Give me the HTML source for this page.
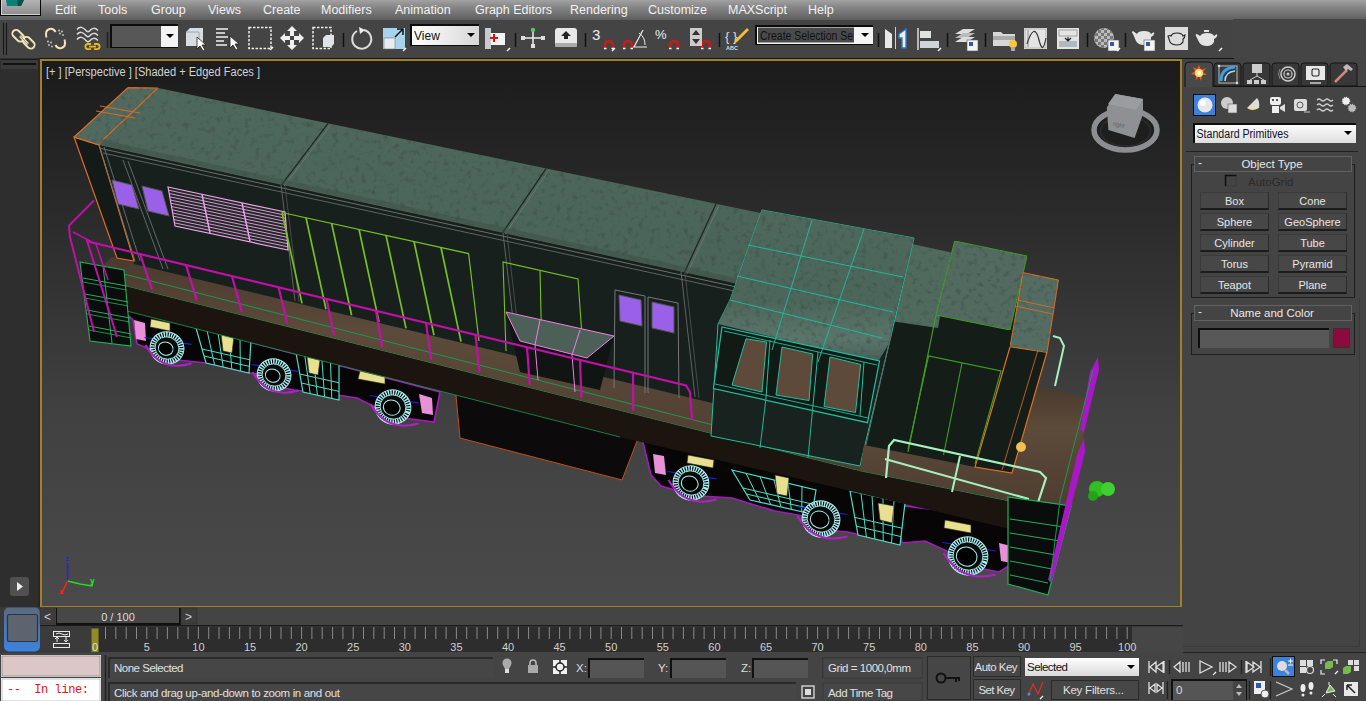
<!DOCTYPE html>
<html><head><meta charset="utf-8">
<style>
*{margin:0;padding:0;box-sizing:border-box}
html,body{width:1366px;height:701px;overflow:hidden;background:#444;font-family:"Liberation Sans",sans-serif;font-size:12px;color:#ddd}
.a{position:absolute}
.t{position:absolute;white-space:nowrap;line-height:1}
#menu{left:0;top:0;width:1366px;height:20px;background:linear-gradient(#a2a2a2,#8a8a8a 30%,#5e5e5e)}
#menu .t{top:4px;font-size:12.5px;color:#f2f2f2}
#tb{left:0;top:20px;width:1234px;height:39px;background:#444;border-bottom:1px solid #151515;border-right:1px solid #151515}
#vp{left:40px;top:59px;width:1142px;height:549px;border:2px solid #a08028;background:linear-gradient(#1b1b1b,#292929 25%,#383838 50%,#414141 65%,#4a4a4a)}
#cp{left:1183px;top:58px;width:183px;height:595px;background:#444}
.btn{position:absolute;width:69px;height:18px;background:#474747;border:1px solid #2b2b2b;border-top-color:#3a3a3a;border-left-color:#3a3a3a;border-bottom:2px solid #1c1c1c;color:#e6e6e6;text-align:center;font-size:11px;line-height:16px}
</style></head><body>
<div id="menu" class="a">
 <div class="a" style="left:0;top:0;width:41px;height:16px;background:linear-gradient(#b4b4b4,#8c8c8c);border:1px solid #080808;border-top:none;box-shadow:inset 1px -1px 0 #d0d0d0"></div>
 <svg class="a" style="left:0;top:0" width="41" height="16"><path d="M6 0 h18 l-3 6 h-14z" fill="#0a8078"/><path d="M17 0 h7 l-3 6 h-3z" fill="#05504a"/></svg>
 <div class="t" style="left:55px">Edit</div>
 <div class="t" style="left:98px">Tools</div>
 <div class="t" style="left:151px">Group</div>
 <div class="t" style="left:208px">Views</div>
 <div class="t" style="left:263px">Create</div>
 <div class="t" style="left:321px">Modifiers</div>
 <div class="t" style="left:395px">Animation</div>
 <div class="t" style="left:475px">Graph Editors</div>
 <div class="t" style="left:570px">Rendering</div>
 <div class="t" style="left:648px">Customize</div>
 <div class="t" style="left:728px">MAXScript</div>
 <div class="t" style="left:808px">Help</div>
</div>
<div id="tb" class="a"></div>
<svg class="a" style="left:0;top:19px" width="1233" height="39" viewBox="0 19 1233 39">
 <g stroke="#1a1a1a" stroke-width="1.2"><line x1="3.5" y1="23" x2="3.5" y2="55"/><line x1="6.5" y1="23" x2="6.5" y2="55"/></g>
 <!-- link -->
 <g fill="none" stroke="#f2e6b8" stroke-width="1.9">
  <rect x="14.5" y="29" width="7.5" height="13.5" rx="3.75" transform="rotate(-45 18.25 35.75)"/>
  <rect x="25" y="36" width="7.5" height="13.5" rx="3.75" transform="rotate(-45 28.75 42.75)"/>
 </g>
 <path d="M20 36 l8 8" stroke="#f2e6b8" stroke-width="2.6"/><path d="M20 36 l8 8" stroke="#7a7050" stroke-width="0.7"/>
 <!-- unlink -->
 <g fill="none" stroke="#f2e6b8" stroke-width="2"><path d="M46.5 37.5 q-2 -7 3 -8.5 q4 -1 6 3"/><path d="M64.5 39.5 q2 7 -3 8.5 q-4 1 -6 -3"/></g>
 <g fill="#b8b8b8"><circle cx="59" cy="30.5" r="1.1"/><circle cx="62" cy="31.5" r="1.1"/><circle cx="60" cy="33.5" r="1.1"/><circle cx="63" cy="35" r="1"/><circle cx="48" cy="41.5" r="1.1"/><circle cx="51" cy="42.5" r="1.1"/><circle cx="49" cy="45" r="1.1"/><circle cx="52" cy="46.5" r="1"/></g>
 <!-- bind -->
 <g fill="none" stroke="#dcdcdc" stroke-width="1.5"><path d="M77 29.5 q4 -5 9.5 1.5 q1.5 1.5 3 0 q4 -5 8.5 -0.5"/><path d="M77 34.5 q4 -5 9.5 1.5 q1.5 1.5 3 0 q4 -5 8.5 -0.5"/><path d="M77 39.5 q4 -5 9.5 1.5 q1.5 1.5 3 0 q4 -5 8.5 -0.5"/></g>
 <g fill="none" stroke="#e8b818" stroke-width="1.8"><path d="M91 44 h-3 a2.6 2.6 0 0 0 0 5.2 h3"/><path d="M94 44 h3 a2.6 2.6 0 0 1 0 5.2 h-3"/><path d="M89 46.6 h7"/></g>
 <line x1="107.5" y1="32" x2="107.5" y2="48" stroke="#1e1e1e" stroke-width="1.5"/>
 <!-- selection filter dropdown -->
 <rect x="110" y="24" width="68" height="24" fill="#0c0c0c"/>
 <rect x="112" y="26" width="49" height="21" fill="#575757"/>
 <rect x="161" y="26" width="17" height="21" fill="#f4f4f4"/>
 <path d="M166 34 h8 l-4 4z" fill="#000"/>
 <!-- select object -->
 <path d="M186 32 l4 -4 h13 v14 l-4 4 h-13z" fill="#d8dde4"/><path d="M186 32 h13 v14" fill="none" stroke="#9aa" stroke-width="1"/>
 <path d="M197 37 v12 l3 -3 l3 5 l2 -1 l-3 -5 h4z" fill="#fff" stroke="#222" stroke-width="0.8"/>
 <!-- select by name -->
 <g stroke="#e8e8e8" stroke-width="1.6"><line x1="216" y1="29" x2="228" y2="29"/><line x1="216" y1="33" x2="225" y2="33"/><line x1="216" y1="37" x2="228" y2="37"/><line x1="216" y1="41" x2="224" y2="41"/><line x1="216" y1="45" x2="227" y2="45"/></g>
 <path d="M230 36 v12 l3 -3 l3 5 l2 -1 l-3 -5 h4z" fill="#fff" stroke="#222" stroke-width="0.8"/>
 <!-- rect select -->
 <rect x="249" y="27.5" width="22" height="21" fill="none" stroke="#eee" stroke-width="1.5" stroke-dasharray="2.5 1.5"/>
 <path d="M270 50 l3 -3" stroke="#fff" stroke-width="1.5"/>
 <!-- move -->
 <g fill="#f0f0f0"><path d="M292 26 l-5 5 h3 v5 h4 v-5 h3z"/><path d="M292 50 l-5 -5 h3 v-5 h4 v5 h3z"/><path d="M280 38 l5 -5 v3 h5 v4 h-5 v3z"/><path d="M304 38 l-5 -5 v3 h-5 v4 h5 v3z"/></g>
 <!-- window crossing -->
 <rect x="313" y="27.5" width="18" height="21" fill="none" stroke="#eee" stroke-width="1.5" stroke-dasharray="2.5 1.5"/>
 <path d="M323 38 l3 -3 h8 v9 l-3 3 h-8z" fill="#e0e4e8"/>
 <line x1="343.5" y1="33" x2="343.5" y2="47" stroke="#111" stroke-width="1.5"/>
 <!-- rotate -->
 <path d="M357 31 a9.5 9.5 0 1 0 7 -1" fill="none" stroke="#ddd" stroke-width="2"/><path d="M359 27 l6 3 l-5 4z" fill="#eee"/>
 <!-- scale -->
 <rect x="383" y="28" width="22" height="21" fill="#a9d2ec"/><rect x="384" y="38" width="11" height="11" fill="#e6ecf0" stroke="#667" stroke-width="0.5"/>
 <path d="M395 37 l8 -8 M397 29 h6 v6" fill="none" stroke="#111" stroke-width="1.5"/><path d="M403 51 l3 -3" stroke="#fff" stroke-width="1.5"/>
 <!-- view dropdown -->
 <rect x="410" y="24" width="69" height="22" fill="#0c0c0c"/>
 <rect x="412" y="26" width="67" height="19" fill="url(#wg)"/>
 <path d="M467 33 h8 l-4 4z" fill="#000"/>
 <defs><linearGradient id="wg" x1="0" y1="0" x2="1" y2="0"><stop offset="0" stop-color="#fff"/><stop offset="1" stop-color="#d8d8d8"/></linearGradient>
 <linearGradient id="wg2" x1="0" y1="0" x2="0" y2="1"><stop offset="0" stop-color="#fff"/><stop offset="1" stop-color="#dcdcdc"/></linearGradient></defs>
 <text x="414" y="40" font-size="12" fill="#111" font-family="Liberation Sans">View</text>
 <!-- pivot -->
 <rect x="485" y="28" width="6" height="21" fill="#c8ccd0"/><rect x="491" y="33" width="14" height="12" fill="#f4f4f4"/>
 <path d="M490 38 h8 M494 34 v8" stroke="#e01010" stroke-width="2"/><path d="M507 51 l3 -3" stroke="#fff" stroke-width="1.5"/>
 <line x1="515.5" y1="33" x2="515.5" y2="47" stroke="#111" stroke-width="1.5"/>
 <!-- manipulate -->
 <path d="M533 30 v16 M524 38 h18" stroke="#eee" stroke-width="1.5"/><circle cx="533" cy="30" r="2.2" fill="#5c5"/><rect x="521" y="36" width="4" height="4" fill="#ddd"/><rect x="541" y="36" width="4" height="4" fill="#ddd"/><rect x="531" y="44" width="4" height="4" fill="#ddd"/>
 <!-- keyboard override -->
 <rect x="555" y="28" width="22" height="19" rx="3" fill="#e8e8e8"/><rect x="555" y="43" width="22" height="4" rx="1" fill="#aaa"/><path d="M566 31 l-5 5 h3 v3 h4 v-3 h3z" fill="#222"/>
 <line x1="585.5" y1="33" x2="585.5" y2="47" stroke="#111" stroke-width="1.5"/>
 <!-- snaps -->
 <text x="592" y="40" font-size="15" fill="#eee" font-family="Liberation Sans">3</text>
 <g fill="none" stroke="#d01818" stroke-width="2.6"><path d="M605 49 v-4 a4 4 0 0 1 8 0 v4"/><path d="M624 49 v-4 a4 4 0 0 1 8 0 v4"/><path d="M670 49 v-4 a4 4 0 0 1 8 0 v4"/><path d="M702 49 v-4 a4 4 0 0 1 8 0 v4"/></g>
 <g stroke="#fff" stroke-width="1.5"><path d="M604 48.5 h2.5 M611.5 48.5 h2.5 M623 48.5 h2.5 M630.5 48.5 h2.5 M669 48.5 h2.5 M676.5 48.5 h2.5 M701 48.5 h2.5 M708.5 48.5 h2.5"/></g>
 <path d="M612 51 l3 -3" stroke="#fff" stroke-width="1.5"/>
 <path d="M633 47 h14 M634 47 l9 -17" stroke="#eee" stroke-width="1.2" fill="none"/><path d="M639 33 a14 14 0 0 1 6 12" fill="none" stroke="#eee" stroke-width="1"/>
 <text x="655" y="39" font-size="13" fill="#eee" font-family="Liberation Sans">%</text>
 <rect x="690" y="28" width="12" height="18" fill="#ccc"/><path d="M692 35 l4 -5 l4 5z M692 39 l4 5 l4 -5z" fill="#333"/>
 <line x1="719.5" y1="33" x2="719.5" y2="47" stroke="#111" stroke-width="1.5"/>
 <!-- named sel -->
 <text x="725" y="41" font-size="13" fill="#ddd" font-family="Liberation Sans">{ }</text><path d="M735 40 l12 -12 l2 2 l-12 12 l-3 1z" fill="#f0c030"/>
 <text x="726" y="50" font-size="5.5" fill="#ddd" font-family="Liberation Sans" font-weight="bold">ABC</text>
 <rect x="755" y="25" width="118" height="20" fill="#0c0c0c"/><rect x="757" y="27" width="116" height="17" fill="#f4f4f4"/><rect x="758" y="27.5" width="96" height="15" fill="#4a4a4a"/>
 <text x="760" y="39.5" font-size="12" fill="#111" font-family="Liberation Sans" textLength="93" lengthAdjust="spacingAndGlyphs">Create Selection Se</text>
 <path d="M861 33 h8 l-4 4z" fill="#000"/>
 <line x1="878.5" y1="33" x2="878.5" y2="47" stroke="#111" stroke-width="1.5"/>
 <!-- mirror -->
 <path d="M885 29 l7 5 v14 h-7z" fill="#e8e8e8"/>
 <line x1="895.5" y1="27" x2="895.5" y2="49" stroke="#d0d0d0" stroke-width="1"/>
 <path d="M906 29 l-7 5 v4 h3 v10 h4z" fill="#e8eef4" stroke="#2a7ad0" stroke-width="1.3"/>
 <!-- align -->
 <line x1="918" y1="28" x2="918" y2="50" stroke="#ddd" stroke-width="1.5"/><rect x="920" y="31" width="11" height="7" fill="#e0e0e0"/><rect x="920" y="41" width="19" height="7" fill="#d0d4d8"/><path d="M938 51 l3 -3" stroke="#fff" stroke-width="1.5"/>
 <line x1="947.5" y1="33" x2="947.5" y2="47" stroke="#111" stroke-width="1.5"/>
 <!-- layers -->
 <g fill="#ddd"><path d="M955 34 l8 -5 h12 l-8 5z"/><path d="M955 38 l8 -5 h12 l-8 5z" fill="#bbb"/><path d="M955 42 l8 -5 h12 l-8 5z"/></g><rect x="967" y="40" width="11" height="11" fill="#f4f4f4" stroke="#555" stroke-width="0.6"/><rect x="969" y="42" width="4" height="4" fill="#2a5aa8"/>
 <line x1="985.5" y1="33" x2="985.5" y2="47" stroke="#111" stroke-width="1.5"/>
 <!-- explorer -->
 <path d="M993 32 h8 l2 2 h12 v12 h-22z" fill="#d8d8d8"/><rect x="993" y="36" width="22" height="4" fill="#aaa"/><circle cx="1013" cy="44" r="4" fill="#f8c838"/><rect x="1011" y="47" width="4" height="4" fill="#aaa"/>
 <!-- curve editor -->
 <rect x="1024" y="28" width="23" height="21" fill="#e4e4e4"/><rect x="1025" y="29" width="21" height="19" fill="none" stroke="#999" stroke-width="0.6"/><path d="M1027 44 c5 -16 9 -16 12 -4 s5 8 7 -2" fill="none" stroke="#333" stroke-width="1.2"/><line x1="1028" y1="30" x2="1028" y2="47" stroke="#555" stroke-width="0.6"/>
 <!-- schematic/dope -->
 <rect x="1057" y="28" width="22" height="21" fill="#e4e4e4"/><rect x="1059" y="30" width="18" height="6" fill="#e4e4e4" stroke="#777" stroke-width="0.6"/><rect x="1059" y="41" width="18" height="6" fill="#b0b8c0"/><path d="M1068 37 v3 M1065 38 l3 3 l3 -3" stroke="#222" stroke-width="1.2" fill="none"/>
 <line x1="1087.5" y1="33" x2="1087.5" y2="47" stroke="#111" stroke-width="1.5"/>
 <!-- material -->
 <circle cx="1104" cy="38" r="10" fill="#bbb"/><circle cx="1104" cy="38" r="10" fill="url(#chk)"/>
 <defs><pattern id="chk" width="6" height="6" patternUnits="userSpaceOnUse"><rect width="3" height="3" fill="#777"/><rect x="3" y="3" width="3" height="3" fill="#777"/></pattern></defs>
 <rect x="1108" y="40" width="11" height="11" fill="#f4f4f4" stroke="#555" stroke-width="0.6"/><rect x="1110" y="42" width="4" height="4" fill="#2a5aa8"/><path d="M1117 51 l3 -3" stroke="#fff" stroke-width="1.5"/>
 <line x1="1125.5" y1="33" x2="1125.5" y2="47" stroke="#111" stroke-width="1.5"/>
 <!-- render setup teapot -->
 <path d="M1133 34 q-2 -2 0 -3 l4 3 q1 -3 7 -3 q6 0 7 3 l3 -2 q1 3 -3 5 v4 q-2 4 -7 4 q-6 0 -8 -4z" fill="#e4e4e4"/><rect x1="1143" x="1144" y="40" width="11" height="11" fill="#f4f4f4" stroke="#555" stroke-width="0.6"/><rect x="1146" y="42" width="4" height="4" fill="#2a5aa8"/>
 <!-- rendered frame -->
 <rect x="1165" y="27" width="23" height="23" fill="#dcdcdc"/><path d="M1168 36 q2 -1 3 0 q1 -3 6 -3 q5 0 6 3 l2 -1 q0 3 -2 4 v3 q-2 3 -6 3 q-5 0 -7 -3z" fill="none" stroke="#222" stroke-width="1.1"/>
 <!-- render -->
 <path d="M1196 36 q-1 -2 1 -2 l3 2 q2 -3 7 -3 q6 0 7 3 l3 -2 q1 3 -3 5 v3 q-2 4 -7 4 q-6 0 -8 -4z" fill="#e4e4e4"/><path d="M1204 31 h5" stroke="#e4e4e4" stroke-width="2"/><path d="M1219 51 l3 -3" stroke="#fff" stroke-width="1.5"/>
</svg>

<div class="a" style="left:0;top:58px;width:40px;height:549px;background:#2e2e2e;border-right:2px solid #262626"></div>
<div class="a" style="left:1px;top:59px;width:37px;height:10px;background:#3a3a3a;border-top:1px solid #1a1a1a"></div>
<div class="a" style="left:3px;top:63px;width:33px;height:2px;background:#111"></div>
<div class="a" style="left:10px;top:577px;width:19px;height:19px;background:#505050;border-radius:3px"></div>
<svg class="a" style="left:10px;top:577px" width="19" height="19"><path d="M7 5 l6 4.5 l-6 4.5z" fill="#eee"/></svg>
<div id="vp" class="a"></div>
<svg class="a" style="left:42px;top:61px" width="1139" height="544" viewBox="42 61 1139 544">
<defs>
<filter id="nz" x="0" y="0" width="100%" height="100%" color-interpolation-filters="sRGB"><feTurbulence type="fractalNoise" baseFrequency="0.18" numOctaves="3" seed="11" result="t"/><feColorMatrix in="t" type="matrix" values="0 0 0 0 0.22  0 0 0 0 0.28  0 0 0 0 0.26  0 0 0 1.5 -0.8" result="c"/><feComposite in="c" in2="SourceGraphic" operator="in" result="d"/><feMerge><feMergeNode in="SourceGraphic"/><feMergeNode in="d"/></feMerge></filter>
<linearGradient id="roofG" x1="0" y1="0" x2="0" y2="1"><stop offset="0" stop-color="#4f685d"/><stop offset="0.85" stop-color="#4b6459"/><stop offset="1" stop-color="#566c63"/></linearGradient>
<linearGradient id="cabG" x1="0" y1="0" x2="0" y2="1"><stop offset="0" stop-color="#4e685d"/><stop offset="0.6" stop-color="#4c665b"/><stop offset="0.85" stop-color="#5a756b"/><stop offset="1" stop-color="#47605a"/></linearGradient>
<linearGradient id="deckG" x1="0" y1="0" x2="0" y2="1"><stop offset="0" stop-color="#4a3a2e"/><stop offset="0.35" stop-color="#5c4a3a"/><stop offset="1" stop-color="#4e3e31"/></linearGradient>
</defs>
<polygon points="120.0,308.0 133.0,320.0 137.0,344.0 155.0,351.0 177.0,360.0 207.0,363.0 245.0,372.0 262.0,375.0 279.0,387.0 294.0,390.0 337.0,395.0 357.0,398.0 381.0,410.0 396.0,417.0 434.0,422.0 440.0,392.0" fill="#080506" stroke="#a818c0" stroke-width="1.6"/>
<polygon points="640.0,430.0 651.0,475.0 661.0,486.0 689.0,494.0 702.0,496.0 732.0,498.0 748.0,503.0 775.0,511.0 803.0,516.0 825.0,530.0 848.0,532.0 860.0,535.0 900.0,544.0 905.0,500.0" fill="#080506" stroke="#a818c0" stroke-width="1.6"/>
<polygon points="895.0,505.0 902.0,543.0 925.0,541.0 953.0,554.0 968.0,566.0 999.0,572.0 1017.0,561.0 1025.0,520.0" fill="#080506" stroke="#a818c0" stroke-width="1.6"/>
<polygon points="196.0,328.0 251.0,340.0 249.0,373.0 206.0,363.0" fill="#050505" stroke="#48e0c8" stroke-width="1.2"/>
<line x1="207.0" y1="330.4" x2="214.6" y2="365.0" stroke="#48e0c8" stroke-width="1"/>
<line x1="218.0" y1="332.8" x2="223.2" y2="367.0" stroke="#48e0c8" stroke-width="1"/>
<line x1="229.0" y1="335.2" x2="231.8" y2="369.0" stroke="#48e0c8" stroke-width="1"/>
<line x1="240.0" y1="337.6" x2="240.4" y2="371.0" stroke="#48e0c8" stroke-width="1"/>
<line x1="202.0" y1="349.0" x2="249.8" y2="359.8" stroke="#48e0c8" stroke-width="1"/>
<line x1="204.0" y1="356.0" x2="249.4" y2="366.4" stroke="#48e0c8" stroke-width="1"/>
<polygon points="295.0,347.0 339.0,357.0 339.0,400.0 303.0,392.0" fill="#050505" stroke="#48e0c8" stroke-width="1.2"/>
<line x1="303.8" y1="349.0" x2="310.2" y2="393.6" stroke="#48e0c8" stroke-width="1"/>
<line x1="312.6" y1="351.0" x2="317.4" y2="395.2" stroke="#48e0c8" stroke-width="1"/>
<line x1="321.4" y1="353.0" x2="324.6" y2="396.8" stroke="#48e0c8" stroke-width="1"/>
<line x1="330.2" y1="355.0" x2="331.8" y2="398.4" stroke="#48e0c8" stroke-width="1"/>
<line x1="299.8" y1="374.0" x2="339.0" y2="382.8" stroke="#48e0c8" stroke-width="1"/>
<line x1="301.4" y1="383.0" x2="339.0" y2="391.4" stroke="#48e0c8" stroke-width="1"/>
<polygon points="732.0,470.0 816.0,490.0 812.0,514.0 750.0,500.0" fill="#050505" stroke="#48e0c8" stroke-width="1.2"/>
<line x1="746.0" y1="473.3" x2="760.3" y2="502.3" stroke="#48e0c8" stroke-width="1"/>
<line x1="760.0" y1="476.7" x2="770.7" y2="504.7" stroke="#48e0c8" stroke-width="1"/>
<line x1="774.0" y1="480.0" x2="781.0" y2="507.0" stroke="#48e0c8" stroke-width="1"/>
<line x1="788.0" y1="483.3" x2="791.3" y2="509.3" stroke="#48e0c8" stroke-width="1"/>
<line x1="802.0" y1="486.7" x2="801.7" y2="511.7" stroke="#48e0c8" stroke-width="1"/>
<line x1="742.8" y1="488.0" x2="813.6" y2="504.4" stroke="#48e0c8" stroke-width="1"/>
<line x1="746.4" y1="494.0" x2="812.8" y2="509.2" stroke="#48e0c8" stroke-width="1"/>
<polygon points="850.0,491.0 905.0,503.0 900.0,545.0 858.0,535.0" fill="#050505" stroke="#48e0c8" stroke-width="1.2"/>
<line x1="861.0" y1="493.4" x2="866.4" y2="537.0" stroke="#48e0c8" stroke-width="1"/>
<line x1="872.0" y1="495.8" x2="874.8" y2="539.0" stroke="#48e0c8" stroke-width="1"/>
<line x1="883.0" y1="498.2" x2="883.2" y2="541.0" stroke="#48e0c8" stroke-width="1"/>
<line x1="894.0" y1="500.6" x2="891.6" y2="543.0" stroke="#48e0c8" stroke-width="1"/>
<line x1="854.8" y1="517.4" x2="902.0" y2="528.2" stroke="#48e0c8" stroke-width="1"/>
<line x1="856.4" y1="526.2" x2="901.0" y2="536.6" stroke="#48e0c8" stroke-width="1"/>
<polygon points="151.0,319.0 170.0,323.0 170.0,331.0 150.0,327.0" fill="#e8e090" stroke="#2a2a10" stroke-width="0.6"/>
<polygon points="221.0,334.0 234.0,336.0 232.0,353.0 223.0,351.0" fill="#e8e090" stroke="#2a2a10" stroke-width="0.6"/>
<polygon points="307.0,357.0 320.0,360.0 318.0,375.0 309.0,373.0" fill="#e8e090" stroke="#2a2a10" stroke-width="0.6"/>
<polygon points="360.0,371.0 385.0,377.0 385.0,384.0 358.0,379.0" fill="#e8e090" stroke="#2a2a10" stroke-width="0.6"/>
<polygon points="688.0,455.0 714.0,460.0 713.0,468.0 687.0,463.0" fill="#e8e090" stroke="#2a2a10" stroke-width="0.6"/>
<polygon points="775.0,475.0 789.0,478.0 787.0,496.0 777.0,494.0" fill="#e8e090" stroke="#2a2a10" stroke-width="0.6"/>
<polygon points="878.0,503.0 894.0,506.0 892.0,523.0 880.0,520.0" fill="#e8e090" stroke="#2a2a10" stroke-width="0.6"/>
<polygon points="945.0,520.0 971.0,525.0 971.0,533.0 944.0,528.0" fill="#e8e090" stroke="#2a2a10" stroke-width="0.6"/>
<polygon points="134.0,320.0 145.0,323.0 146.0,341.0 136.0,339.0" fill="#e890d8"/>
<polygon points="419.0,394.0 432.0,398.0 433.0,415.0 422.0,413.0" fill="#e890d8"/>
<polygon points="653.0,454.0 664.0,456.0 666.0,475.0 655.0,473.0" fill="#e890d8"/>
<polygon points="999.0,543.0 1015.0,547.0 1017.0,564.0 1001.0,561.0" fill="#e890d8"/>
<path d="M144.5 337.5 l47.0 6.9" fill="none" stroke="#2020d0" stroke-width="1.2"/>
<ellipse cx="167" cy="348" rx="14.5" ry="13.5" fill="#0a0a0a" stroke="#a8f0f0" stroke-width="5" stroke-dasharray="1.4 1.1" transform="rotate(20 167 348)"/>
<ellipse cx="167" cy="348" rx="17.0" ry="16.0" fill="none" stroke="#a8f0f0" stroke-width="1" transform="rotate(20 167 348)"/>
<ellipse cx="167" cy="348" rx="12.0" ry="11.0" fill="none" stroke="#a8f0f0" stroke-width="0.8" transform="rotate(20 167 348)"/>
<ellipse cx="166" cy="349" rx="7.5" ry="6.5" fill="#000" stroke="#a8f0f0" stroke-width="1" transform="rotate(20 167 348)"/>
<path d="M145.5 345 Q161 372.5 191.5 363.5" fill="none" stroke="#b020c8" stroke-width="2"/>
<path d="M251.5 364.5 l47.0 6.9" fill="none" stroke="#2020d0" stroke-width="1.2"/>
<ellipse cx="274" cy="375" rx="14.5" ry="13.5" fill="#0a0a0a" stroke="#a8f0f0" stroke-width="5" stroke-dasharray="1.4 1.1" transform="rotate(20 274 375)"/>
<ellipse cx="274" cy="375" rx="17.0" ry="16.0" fill="none" stroke="#a8f0f0" stroke-width="1" transform="rotate(20 274 375)"/>
<ellipse cx="274" cy="375" rx="12.0" ry="11.0" fill="none" stroke="#a8f0f0" stroke-width="0.8" transform="rotate(20 274 375)"/>
<ellipse cx="273" cy="376" rx="7.5" ry="6.5" fill="#000" stroke="#a8f0f0" stroke-width="1" transform="rotate(20 274 375)"/>
<path d="M252.5 372 Q268 399.5 298.5 390.5" fill="none" stroke="#b020c8" stroke-width="2"/>
<path d="M369.5 395.5 l49.0 7.4" fill="none" stroke="#2020d0" stroke-width="1.2"/>
<ellipse cx="393" cy="407" rx="15.5" ry="14.5" fill="#0a0a0a" stroke="#a8f0f0" stroke-width="5" stroke-dasharray="1.4 1.1" transform="rotate(20 393 407)"/>
<ellipse cx="393" cy="407" rx="18.0" ry="17.0" fill="none" stroke="#a8f0f0" stroke-width="1" transform="rotate(20 393 407)"/>
<ellipse cx="393" cy="407" rx="13.0" ry="12.0" fill="none" stroke="#a8f0f0" stroke-width="0.8" transform="rotate(20 393 407)"/>
<ellipse cx="392" cy="408" rx="8.5" ry="7.5" fill="#000" stroke="#a8f0f0" stroke-width="1" transform="rotate(20 393 407)"/>
<path d="M370.5 404 Q387 432.5 418.5 423.5" fill="none" stroke="#b020c8" stroke-width="2"/>
<path d="M667.5 471.5 l49.0 7.4" fill="none" stroke="#2020d0" stroke-width="1.2"/>
<ellipse cx="691" cy="483" rx="15.5" ry="14.5" fill="#0a0a0a" stroke="#a8f0f0" stroke-width="5" stroke-dasharray="1.4 1.1" transform="rotate(20 691 483)"/>
<ellipse cx="691" cy="483" rx="18.0" ry="17.0" fill="none" stroke="#a8f0f0" stroke-width="1" transform="rotate(20 691 483)"/>
<ellipse cx="691" cy="483" rx="13.0" ry="12.0" fill="none" stroke="#a8f0f0" stroke-width="0.8" transform="rotate(20 691 483)"/>
<ellipse cx="690" cy="484" rx="8.5" ry="7.5" fill="#000" stroke="#a8f0f0" stroke-width="1" transform="rotate(20 691 483)"/>
<path d="M668.5 480 Q685 508.5 716.5 499.5" fill="none" stroke="#b020c8" stroke-width="2"/>
<path d="M796.5 506.5 l51.0 8.0" fill="none" stroke="#2020d0" stroke-width="1.2"/>
<ellipse cx="821" cy="519" rx="16.5" ry="15.5" fill="#0a0a0a" stroke="#a8f0f0" stroke-width="5" stroke-dasharray="1.4 1.1" transform="rotate(20 821 519)"/>
<ellipse cx="821" cy="519" rx="19.0" ry="18.0" fill="none" stroke="#a8f0f0" stroke-width="1" transform="rotate(20 821 519)"/>
<ellipse cx="821" cy="519" rx="14.0" ry="13.0" fill="none" stroke="#a8f0f0" stroke-width="0.8" transform="rotate(20 821 519)"/>
<ellipse cx="820" cy="520" rx="9.5" ry="8.5" fill="#000" stroke="#a8f0f0" stroke-width="1" transform="rotate(20 821 519)"/>
<path d="M797.5 516 Q815 545.5 847.5 536.5" fill="none" stroke="#b020c8" stroke-width="2"/>
<path d="M942.5 542.5 l53.0 8.5" fill="none" stroke="#2020d0" stroke-width="1.2"/>
<ellipse cx="968" cy="556" rx="17.5" ry="16.5" fill="#0a0a0a" stroke="#a8f0f0" stroke-width="5" stroke-dasharray="1.4 1.1" transform="rotate(20 968 556)"/>
<ellipse cx="968" cy="556" rx="20.0" ry="19.0" fill="none" stroke="#a8f0f0" stroke-width="1" transform="rotate(20 968 556)"/>
<ellipse cx="968" cy="556" rx="15.0" ry="14.0" fill="none" stroke="#a8f0f0" stroke-width="0.8" transform="rotate(20 968 556)"/>
<ellipse cx="967" cy="557" rx="10.5" ry="9.5" fill="#000" stroke="#a8f0f0" stroke-width="1" transform="rotate(20 968 556)"/>
<path d="M943.5 553 Q962 583.5 995.5 574.5" fill="none" stroke="#b020c8" stroke-width="2"/>
<polygon points="455.0,385.0 460.0,438.0 622.0,480.0 637.0,441.0 637.0,420.0" fill="#0c0a0a" stroke="#c05010" stroke-width="1"/>
<polygon points="103.0,278.0 860.0,468.7 1030.0,503.0 1030.0,534.0 860.0,493.2 620.0,437.0 113.0,307.5" fill="#1c140f"/>
<polyline points="103.0,280.0 860.0,470.7 1030.0,505.0" fill="none" stroke="#1a9a50" stroke-width="1"/>
<polyline points="113.0,307.5 620.0,437.0" fill="none" stroke="#1a9a50" stroke-width="0.8"/>
<polygon points="112.0,256.7 900.0,446.2 860.0,470.7 103.0,280.0 96.0,272.0" fill="url(#deckG)"/>
<polyline points="95.0,266.6 860.0,462.6" fill="none" stroke="#1a9a50" stroke-width="1"/>
<polygon points="99.0,145.0 950.0,330.1 950.0,460.3 134.0,264.0" fill="#17201c"/>
<polygon points="74.0,137.0 99.0,145.0 134.0,261.0 117.0,258.0" fill="#131a17" stroke="#e07020" stroke-width="1.2"/>
<line x1="99" y1="145" x2="135" y2="261" stroke="#707070" stroke-width="0.9"/>
<line x1="104" y1="147" x2="140" y2="261" stroke="#707070" stroke-width="0.9"/>
<line x1="123" y1="160" x2="163" y2="269" stroke="#707070" stroke-width="0.9"/>
<line x1="128" y1="161" x2="168" y2="269" stroke="#707070" stroke-width="0.9"/>
<polygon points="158.0,88.0 949.0,252.0 936.0,327.0 99.0,145.0" fill="url(#roofG)" filter="url(#nz)"/>
<polygon points="128.0,87.6 158.0,88.0 103.0,140.0 99.0,145.0 74.0,137.0" fill="#52695f" stroke="#e07020" stroke-width="1.2" filter="url(#nz)"/>
<polyline points="100.0,106.0 140.0,113.0" fill="none" stroke="#e07020" stroke-width="0.9"/>
<polyline points="96.0,111.0 135.0,118.0" fill="none" stroke="#e07020" stroke-width="0.9"/>
<line x1="328" y1="123.4" x2="281" y2="185.6" stroke="#1e2824" stroke-width="1.3"/>
<line x1="331" y1="124.5" x2="284" y2="186.2" stroke="#6a7a72" stroke-width="0.9"/>
<line x1="546" y1="168.7" x2="502" y2="233.7" stroke="#1e2824" stroke-width="1.3"/>
<line x1="549" y1="169.8" x2="505" y2="234.3" stroke="#6a7a72" stroke-width="0.9"/>
<line x1="716" y1="204.1" x2="684" y2="273.2" stroke="#1e2824" stroke-width="1.3"/>
<line x1="719" y1="205.2" x2="687" y2="273.9" stroke="#6a7a72" stroke-width="0.9"/>
<line x1="100" y1="142" x2="950" y2="327.1" stroke="#3c4e46" stroke-width="5" stroke-opacity="0.45"/>
<line x1="101" y1="148.5" x2="950" y2="333.6" stroke="#707a76" stroke-width="0.9"/>
<line x1="103" y1="153" x2="950" y2="338.1" stroke="#626c68" stroke-width="0.9"/>
<line x1="281" y1="184.6" x2="295" y2="300.7" stroke="#6a6a6a" stroke-width="0.9"/>
<line x1="285" y1="185.6" x2="299" y2="301.7" stroke="#555" stroke-width="0.8"/>
<line x1="503" y1="232.9" x2="517" y2="354.1" stroke="#6a6a6a" stroke-width="0.9"/>
<line x1="507" y1="233.9" x2="521" y2="355.1" stroke="#555" stroke-width="0.8"/>
<line x1="681" y1="271.6" x2="695" y2="396.9" stroke="#6a6a6a" stroke-width="0.9"/>
<line x1="685" y1="272.6" x2="699" y2="397.9" stroke="#555" stroke-width="0.8"/>
<polygon points="112.0,180.0 132.0,185.0 139.0,209.0 118.0,204.0" fill="#9a60e8" stroke="#555" stroke-width="1"/>
<polygon points="142.0,186.0 162.0,191.0 169.0,216.0 148.0,211.0" fill="#9a60e8" stroke="#555" stroke-width="1"/>
<polygon points="619.0,295.0 641.0,300.0 642.0,326.0 620.0,321.0" fill="#9a60e8" stroke="#555" stroke-width="1"/>
<polygon points="652.0,302.0 674.0,307.0 674.0,333.0 652.0,328.0" fill="#9a60e8" stroke="#555" stroke-width="1"/>
<polyline points="614.0,388.0 615.0,290.0 645.0,296.0 645.0,393.0" fill="none" stroke="#777" stroke-width="1"/>
<polyline points="648.0,393.0 648.0,297.0 678.0,303.0 679.0,398.0" fill="none" stroke="#777" stroke-width="1"/>
<polygon points="168.0,187.0 285.0,212.0 288.0,250.0 175.0,226.0" fill="#1e2a26" stroke="#f0a0e8" stroke-width="1.2"/>
<line x1="168.6" y1="190.2" x2="285.2" y2="215.2" stroke="#f0a0e8" stroke-width="0.9"/>
<line x1="169.2" y1="193.5" x2="285.5" y2="218.3" stroke="#f0a0e8" stroke-width="0.9"/>
<line x1="169.8" y1="196.8" x2="285.8" y2="221.5" stroke="#f0a0e8" stroke-width="0.9"/>
<line x1="170.3" y1="200.0" x2="286.0" y2="224.7" stroke="#f0a0e8" stroke-width="0.9"/>
<line x1="170.9" y1="203.2" x2="286.2" y2="227.8" stroke="#f0a0e8" stroke-width="0.9"/>
<line x1="171.5" y1="206.5" x2="286.5" y2="231.0" stroke="#f0a0e8" stroke-width="0.9"/>
<line x1="172.1" y1="209.8" x2="286.8" y2="234.2" stroke="#f0a0e8" stroke-width="0.9"/>
<line x1="172.7" y1="213.0" x2="287.0" y2="237.3" stroke="#f0a0e8" stroke-width="0.9"/>
<line x1="173.2" y1="216.2" x2="287.2" y2="240.5" stroke="#f0a0e8" stroke-width="0.9"/>
<line x1="173.8" y1="219.5" x2="287.5" y2="243.7" stroke="#f0a0e8" stroke-width="0.9"/>
<line x1="174.4" y1="222.8" x2="287.8" y2="246.8" stroke="#f0a0e8" stroke-width="0.9"/>
<line x1="202" y1="194.3" x2="210" y2="232.8" stroke="#f0a0e8" stroke-width="1.5"/>
<line x1="242" y1="202.8" x2="250" y2="241.4" stroke="#f0a0e8" stroke-width="1.5"/>
<polyline points="282.0,212.5 468.6,253.6 479.0,341.0" fill="none" stroke="#78c020" stroke-width="1.2"/>
<line x1="282.0" y1="212.5" x2="302.0" y2="303.4" stroke="#78c020" stroke-width="1.7"/>
<line x1="306.0" y1="217.8" x2="326.0" y2="309.2" stroke="#78c020" stroke-width="1.7"/>
<line x1="331.6" y1="223.4" x2="351.6" y2="315.3" stroke="#78c020" stroke-width="1.7"/>
<line x1="359.0" y1="229.4" x2="379.0" y2="321.9" stroke="#78c020" stroke-width="1.7"/>
<line x1="386.0" y1="235.4" x2="406.0" y2="328.4" stroke="#78c020" stroke-width="1.7"/>
<line x1="414.0" y1="241.5" x2="434.0" y2="335.2" stroke="#78c020" stroke-width="1.7"/>
<line x1="441.0" y1="247.5" x2="461.0" y2="341.6" stroke="#78c020" stroke-width="1.7"/>
<polyline points="506.0,351.0 503.0,262.0 578.0,279.0 584.0,365.0" fill="none" stroke="#78c020" stroke-width="1.1"/>
<line x1="540" y1="270" x2="542" y2="358" stroke="#78c020" stroke-width="1.1"/>
<polygon points="506.0,312.0 614.0,336.0 600.0,390.0 520.0,372.0" fill="#101412"/>
<polygon points="506.0,312.0 614.0,336.0 587.0,358.0 520.0,341.0" fill="#4c6058" stroke="#f080e0" stroke-width="1"/>
<polyline points="540.0,320.0 535.0,345.0 538.0,380.0" fill="none" stroke="#f080e0" stroke-width="1"/>
<polyline points="580.0,330.0 572.0,355.0 575.0,392.0" fill="none" stroke="#f080e0" stroke-width="1"/>
<polygon points="900.0,242.0 951.0,252.5 954.6,241.0 1027.0,256.0 1023.0,272.6 1058.4,280.0 1047.0,352.0 1012.0,473.0 975.0,467.0 860.0,466.0 890.0,340.0 886.0,319.0" fill="#151d19"/>
<polygon points="880.0,237.0 951.0,252.5 938.0,328.0 870.0,318.0" fill="#506a5e" filter="url(#nz)"/>
<polygon points="762.0,210.0 914.0,238.0 890.0,340.0 860.0,466.0 711.0,436.0 718.0,324.0 730.0,300.0" fill="#18221e" stroke="#20c0a0" stroke-width="1"/>
<polygon points="762.0,210.0 914.0,238.0 888.0,345.0 878.0,362.0 718.0,324.0 730.0,300.0" fill="url(#cabG)" filter="url(#nz)"/>
<polygon points="722.0,327.0 879.5,361.0 867.5,422.7 713.4,388.5" fill="#121a16" stroke="#20c0a0" stroke-width="1.2"/>
<polyline points="724.0,331.0 877.0,365.0" fill="none" stroke="#20c0a0" stroke-width="0.9"/>
<polyline points="715.0,384.0 868.0,418.0" fill="none" stroke="#20c0a0" stroke-width="0.9"/>
<polygon points="746.0,338.8 766.5,342.0 762.0,392.0 732.0,385.0" fill="#5e4a3a" stroke="#20c0a0" stroke-width="1"/>
<polygon points="782.0,347.0 812.7,354.0 809.0,400.5 776.0,395.0" fill="#5e4a3a" stroke="#20c0a0" stroke-width="1"/>
<polygon points="830.0,357.0 860.7,364.5 855.5,412.5 824.0,406.5" fill="#5e4a3a" stroke="#20c0a0" stroke-width="1"/>
<line x1="770" y1="340" x2="766" y2="398" stroke="#20c0a0" stroke-width="1"/>
<line x1="818" y1="352" x2="813" y2="405" stroke="#20c0a0" stroke-width="1"/>
<line x1="864" y1="362" x2="860" y2="416" stroke="#20c0a0" stroke-width="1"/>
<line x1="730" y1="300" x2="882" y2="338" stroke="#20b898" stroke-width="1"/>
<line x1="737" y1="276" x2="893" y2="312" stroke="#20b898" stroke-width="1"/>
<line x1="748" y1="245" x2="903" y2="277" stroke="#20b898" stroke-width="1"/>
<line x1="812" y1="220" x2="772" y2="350" stroke="#20b898" stroke-width="1"/>
<line x1="864" y1="229" x2="818" y2="362" stroke="#20b898" stroke-width="1"/>
<line x1="766" y1="398" x2="760" y2="448" stroke="#20b898" stroke-width="1"/>
<line x1="813" y1="405" x2="808" y2="458" stroke="#20b898" stroke-width="1"/>
<polygon points="1038.0,386.0 1088.0,398.0 1076.0,501.0 1030.0,505.0 860.0,470.7 864.0,445.0 975.0,467.0 1012.0,473.0" fill="url(#deckG)"/>
<polygon points="954.6,241.0 1027.0,256.0 1010.0,330.0 936.0,315.0" fill="#526a5f" stroke="#40a020" stroke-width="1" filter="url(#nz)"/>
<polygon points="1023.0,272.6 1058.4,280.0 1047.0,352.4 1010.0,346.8" fill="#546c62" stroke="#e07020" stroke-width="1" filter="url(#nz)"/>
<polyline points="1010.0,347.0 975.0,467.0 1012.0,473.0 1047.0,352.0" fill="none" stroke="#e07020" stroke-width="1.2"/>
<polyline points="1038.0,350.0 1002.0,470.0" fill="none" stroke="#e07020" stroke-width="0.8"/>
<polyline points="1017.0,300.0 1055.0,308.0" fill="none" stroke="#e07020" stroke-width="0.8"/>
<polyline points="1015.0,306.0 1053.0,314.0" fill="none" stroke="#e07020" stroke-width="0.8"/>
<polyline points="936.0,315.0 908.0,452.0" fill="none" stroke="#40a020" stroke-width="1.2"/>
<polyline points="908.0,449.0 928.6,356.0 1001.0,371.0 975.0,464.0" fill="none" stroke="#40a020" stroke-width="1.1"/>
<polyline points="962.0,363.0 943.5,455.0" fill="none" stroke="#40a020" stroke-width="1.1"/>
<polyline points="892.0,330.0 866.0,445.0" fill="none" stroke="#666" stroke-width="1"/>
<circle cx="1021" cy="447" r="5" fill="#f0c050"/>
<polygon points="80.0,262.0 124.0,270.0 131.0,346.0 90.0,341.0" fill="#0a0d0b" stroke="#20b060" stroke-width="1.1"/>
<line x1="83" y1="278" x2="126.6" y2="286" stroke="#20b060" stroke-width="1"/>
<line x1="83" y1="282" x2="126.6" y2="290" stroke="#20b060" stroke-width="0.8"/>
<line x1="85" y1="294" x2="128.2" y2="302" stroke="#20b060" stroke-width="1"/>
<line x1="85" y1="298" x2="128.2" y2="306" stroke="#20b060" stroke-width="0.8"/>
<line x1="87" y1="310" x2="129.8" y2="318" stroke="#20b060" stroke-width="1"/>
<line x1="87" y1="314" x2="129.8" y2="322" stroke="#20b060" stroke-width="0.8"/>
<line x1="89" y1="326" x2="131.4" y2="334" stroke="#20b060" stroke-width="1"/>
<line x1="89" y1="330" x2="131.4" y2="338" stroke="#20b060" stroke-width="0.8"/>
<line x1="103" y1="266" x2="112" y2="343" stroke="#20b060" stroke-width="1"/>
<polyline points="86.0,241.0 686.0,385.5 690.0,392.0 692.0,420.0" fill="none" stroke="#c010a8" stroke-width="2.2"/>
<polyline points="87.0,240.5 117.0,337.0" fill="none" stroke="#c010a8" stroke-width="2"/>
<line x1="140.0" y1="254.0" x2="152.0" y2="289.3" stroke="#c010a8" stroke-width="2.2"/>
<line x1="186.0" y1="265.1" x2="196.9" y2="300.6" stroke="#c010a8" stroke-width="2.2"/>
<line x1="232.0" y1="276.2" x2="241.8" y2="311.9" stroke="#c010a8" stroke-width="2.2"/>
<line x1="278.6" y1="287.4" x2="287.3" y2="323.4" stroke="#c010a8" stroke-width="2.2"/>
<line x1="326.5" y1="298.9" x2="334.0" y2="335.2" stroke="#c010a8" stroke-width="2.2"/>
<line x1="376.0" y1="310.8" x2="382.3" y2="347.3" stroke="#c010a8" stroke-width="2.2"/>
<line x1="426.0" y1="322.9" x2="431.1" y2="359.6" stroke="#c010a8" stroke-width="2.2"/>
<line x1="475.5" y1="334.8" x2="479.4" y2="371.8" stroke="#c010a8" stroke-width="2.2"/>
<line x1="527.0" y1="347.2" x2="529.7" y2="384.5" stroke="#c010a8" stroke-width="2.2"/>
<line x1="580.0" y1="360.0" x2="581.4" y2="397.5" stroke="#c010a8" stroke-width="2.2"/>
<line x1="633.0" y1="372.7" x2="633.2" y2="410.6" stroke="#c010a8" stroke-width="2.2"/>
<polyline points="94.0,331.7 70.0,237.0 69.0,225.6 94.0,200.5" fill="none" stroke="#c010a8" stroke-width="2"/>
<polyline points="73.0,232.0 96.0,244.0 108.0,280.0" fill="none" stroke="#c010a8" stroke-width="1.5"/>
<polyline points="886.0,478.0 889.0,446.0 894.0,440.0 1040.0,472.0 1046.0,478.0 1014.0,576.0" fill="none" stroke="#a8f0c0" stroke-width="2.2"/>
<polyline points="885.0,459.0 1029.0,499.0" fill="none" stroke="#a8f0c0" stroke-width="2"/>
<line x1="960" y1="456" x2="952" y2="492" stroke="#a8f0c0" stroke-width="2"/>
<polyline points="1053.0,336.0 1060.0,338.0 1064.0,346.0 1055.0,386.0" fill="none" stroke="#a8f0c0" stroke-width="2"/>
<polygon points="1008.0,497.0 1071.0,506.0 1048.0,595.0 1008.0,584.0" fill="#0a0d0b" stroke="#20b060" stroke-width="1.2"/>
<line x1="1010" y1="519" x2="1064" y2="527" stroke="#20b060" stroke-width="1"/>
<line x1="1010" y1="533" x2="1060" y2="541" stroke="#20b060" stroke-width="1"/>
<line x1="1010" y1="547" x2="1056" y2="555" stroke="#20b060" stroke-width="1"/>
<line x1="1010" y1="561" x2="1052" y2="569" stroke="#20b060" stroke-width="1"/>
<line x1="1010" y1="575" x2="1048" y2="583" stroke="#20b060" stroke-width="1"/>
<polygon points="1098.0,357.0 1099.0,370.0 1084.0,432.0 1080.0,430.0 1090.0,372.0" fill="#a818c8"/>
<polygon points="1084.0,438.0 1085.0,452.0 1052.0,582.0 1048.0,580.0 1077.0,455.0" fill="#a818c8"/>
<polyline points="1093.0,370.0 1060.0,500.0 1050.0,582.0" fill="none" stroke="#1a9a50" stroke-width="1"/>
<circle cx="1097" cy="489" r="8" fill="#30c020"/><circle cx="1108" cy="489" r="7" fill="#40d030"/><circle cx="1093" cy="496" r="5" fill="#28a018"/>
<text x="46" y="76.3" font-size="12" fill="#d2d2d2" font-family="Liberation Sans" textLength="214" lengthAdjust="spacingAndGlyphs" xml:space="preserve">[+ ] [Perspective ] [Shaded + Edged Faces ]</text>
<ellipse cx="1125.5" cy="130" rx="31.5" ry="20" fill="#1e1e1e" stroke="#8c8e92" stroke-width="5.5"/>
<ellipse cx="1125.5" cy="131" rx="25" ry="15" fill="none" stroke="#2c2c2c" stroke-width="1.5"/>
<polygon points="1115.3,94.0 1143.0,99.0 1143.0,114.0 1134.6,138.0 1108.4,130.0 1106.8,107.5" fill="#8e9094"/>
<polygon points="1115.3,94.0 1143.0,99.0 1136.0,110.0 1108.0,104.0" fill="#9a9ca0"/>
<text x="1113" y="127" font-size="6" fill="#5a5c60" font-family="Liberation Sans" transform="rotate(12 1120 125)">right</text>
<g stroke-width="1.5" fill="none"><line x1="67.6" y1="581" x2="67.6" y2="563" stroke="#2020ff"/><polyline points="67.6,581 80,584 92,586 93,581" stroke="#20e020"/><line x1="67.6" y1="581" x2="61.5" y2="594" stroke="#ff2020"/></g>
<text x="65" y="561" font-size="8" fill="#2020ff" font-family="Liberation Sans" font-weight="bold">z</text>
<text x="90" y="583" font-size="8" fill="#20e020" font-family="Liberation Sans" font-weight="bold">y</text>
<text x="59" y="594" font-size="8" fill="#ff2020" font-family="Liberation Sans" font-weight="bold">x</text>
</svg>

<div class="a" style="left:1183px;top:59px;width:183px;height:594px;background:#444;border-bottom:1px solid #222"></div>
<div class="a" style="left:1233px;top:19px;width:133px;height:39px;background:#454545"></div>
<svg class="a" style="left:1183px;top:58px" width="183" height="240" viewBox="1183 58 183 240">
 <!-- tabs -->
 <rect x="1213" y="86" width="153" height="1" fill="#151515"/>
 <path d="M1185 87 v-21 q0 -4 4 -4 h20 q4 0 4 4 v21" fill="#494949" stroke="#151515" stroke-width="1"/>
 <g fill="#383838" stroke="#151515" stroke-width="1">
  <path d="M1214 86 v-20 q0 -3 3 -3 h21 q3 0 3 3 v20z"/>
  <path d="M1243 86 v-20 q0 -3 3 -3 h21 q3 0 3 3 v20z"/>
  <path d="M1272 86 v-20 q0 -3 3 -3 h21 q3 0 3 3 v20z"/>
  <path d="M1301 86 v-20 q0 -3 3 -3 h21 q3 0 3 3 v20z"/>
  <path d="M1330 86 v-20 q0 -3 3 -3 h21 q3 0 3 3 v20z"/>
 </g>
 <!-- create icon (star) -->
 <g transform="translate(1199 73)"><path d="M0 -8 L2 -3 L7 -5 L4 -1 L8 2 L3 2 L2 8 L0 3 L-3 7 L-3 2 L-8 1 L-4 -2 L-6 -6 L-2 -4z" fill="#f05a28"/><circle r="4" fill="#ffe060"/><circle r="2" fill="#fff"/></g>
 <!-- modify -->
 <rect x="1219" y="66" width="18" height="17" fill="none" stroke="#bbb" stroke-width="1"/><path d="M1221 81 q0 -13 14 -14" fill="none" stroke="#3aa0e8" stroke-width="3"/><path d="M1225 81 q0 -9 10 -10" fill="none" stroke="#a8d8f8" stroke-width="1.5"/>
 <circle cx="1219" cy="66" r="1.3" fill="#ddd"/><circle cx="1237" cy="83" r="1.3" fill="#ddd"/>
 <!-- hierarchy -->
 <rect x="1252" y="64" width="10" height="9" fill="#ccc"/><path d="M1257 73 v3 M1250 80 l7 -4 l7 4" stroke="#ccc" fill="none" stroke-width="1"/><rect x="1247" y="80" width="5" height="4" fill="#ccc"/><rect x="1254" y="80" width="5" height="4" fill="#ccc"/><rect x="1261" y="80" width="5" height="4" fill="#ccc"/>
 <!-- motion -->
 <circle cx="1288" cy="74" r="7" fill="none" stroke="#ccc" stroke-width="1.5"/><circle cx="1288" cy="74" r="4" fill="none" stroke="#ccc" stroke-width="1.2"/><circle cx="1288" cy="74" r="1.5" fill="#ccc"/><path d="M1280 69 q-3 5 0 10" fill="none" stroke="#888" stroke-width="1"/>
 <!-- display -->
 <rect x="1306" y="66" width="19" height="14" fill="#e8e8e8"/><rect x="1312" y="69" width="7" height="7" rx="1.5" fill="none" stroke="#222" stroke-width="1.1"/><path d="M1310 83 h11" stroke="#ccc" stroke-width="1.5"/>
 <!-- utilities hammer -->
 <path d="M1335 82 l12 -12" stroke="#d08878" stroke-width="2.5"/><path d="M1343 67 l4 -3 l6 5 l-2 2 l-3 -2 l-2 2z" fill="#bbb"/>
 <!-- sub icons -->
 <rect x="1193" y="94" width="23" height="22" fill="#111"/><rect x="1194" y="95" width="21" height="20" fill="#3c82dc"/>
 <circle cx="1205" cy="105" r="7.5" fill="#e8e8e8"/><circle cx="1203" cy="103" r="3" fill="#fff"/>
 <circle cx="1227" cy="103" r="6" fill="#ccc"/><rect x="1228" y="104" width="9" height="9" fill="#ddd" stroke="#555" stroke-width="0.6"/>
 <path d="M1247 108 l10 -10 q3 3 2 10z" fill="#ddd"/><path d="M1247 108 q5 4 12 0" fill="#f4e08a"/>
 <rect x="1270" y="97" width="11" height="8" rx="2" fill="#eee"/><rect x="1272" y="106" width="7" height="7" fill="#eee"/><path d="M1280 107 l5 -3 v8 l-5 -3z" fill="#ddd"/><circle cx="1273" cy="100" r="1" fill="#222"/><circle cx="1277" cy="100" r="1" fill="#222"/>
 <rect x="1294" y="99" width="13" height="12" rx="2" fill="#ddd"/><circle cx="1300" cy="105" r="3" fill="none" stroke="#555" stroke-width="1"/><path d="M1304 112 h6" stroke="#ccc" stroke-width="1"/>
 <g fill="none" stroke="#ccc" stroke-width="1.3"><path d="M1317 100 q2 -2 4 0 t4 0 t4 0 t4 0"/><path d="M1317 105 q2 -2 4 0 t4 0 t4 0 t4 0"/><path d="M1317 110 q2 -2 4 0 t4 0 t4 0 t4 0"/></g>
 <circle cx="1346" cy="101" r="3.5" fill="#eee" stroke="#eee" stroke-width="1.5" stroke-dasharray="1 1"/><circle cx="1352" cy="108" r="3.5" fill="#bbb" stroke="#bbb" stroke-width="1.5" stroke-dasharray="1 1"/>
 <!-- dropdown standard primitives -->
 <rect x="1193" y="123" width="163" height="20" fill="#0c0c0c"/>
 <rect x="1195" y="125" width="161" height="18" fill="url(#wg3)"/>
 <defs><linearGradient id="wg3" x1="0" y1="0" x2="0" y2="1"><stop offset="0" stop-color="#fbfbfb"/><stop offset="1" stop-color="#dedede"/></linearGradient></defs>
 <text x="1196.5" y="138" font-size="12" fill="#101030" font-family="Liberation Sans" textLength="92" lengthAdjust="spacingAndGlyphs">Standard Primitives</text>
 <path d="M1344 131 h8 l-4 4z" fill="#000"/>
 <!-- separator -->
 <line x1="1186" y1="151.5" x2="1358" y2="151.5" stroke="#222" stroke-width="1"/>
 <!-- rollout 1 -->
 <rect x="1191.5" y="164.5" width="163" height="133" fill="none" stroke="#1e1e1e" stroke-width="1"/>
 <rect x="1194.5" y="156.5" width="157" height="15" fill="#444" stroke="#6a6a6a" stroke-width="0.8"/>
 <text x="1198" y="167" font-size="12" fill="#ddd" font-family="Liberation Sans">-</text>
 <text x="1272" y="168" font-size="11.5" fill="#e8e8e8" font-family="Liberation Sans" text-anchor="middle">Object Type</text>
 <rect x="1226" y="176" width="10" height="10" fill="none" stroke="#3a3a3a" stroke-width="1"/><path d="M1225.5 186 v-10.5 h11" fill="none" stroke="#111" stroke-width="1.5"/>
 <text x="1248" y="186" font-size="11.5" fill="#2a2a2a" font-family="Liberation Sans">AutoGrid</text>
</svg>
<div class="btn" style="left:1200px;top:192px">Box</div>
<div class="btn" style="left:1278px;top:192px">Cone</div>
<div class="btn" style="left:1200px;top:213px">Sphere</div>
<div class="btn" style="left:1278px;top:213px">GeoSphere</div>
<div class="btn" style="left:1200px;top:234px">Cylinder</div>
<div class="btn" style="left:1278px;top:234px">Tube</div>
<div class="btn" style="left:1200px;top:255px">Torus</div>
<div class="btn" style="left:1278px;top:255px">Pyramid</div>
<div class="btn" style="left:1200px;top:276px">Teapot</div>
<div class="btn" style="left:1278px;top:276px">Plane</div>
<svg class="a" style="left:1183px;top:298px" width="183" height="355" viewBox="1183 298 183 355">
 <rect x="1191.5" y="313.5" width="163" height="41" fill="none" stroke="#1e1e1e" stroke-width="1"/>
 <rect x="1194.5" y="305.5" width="157" height="15" fill="#444" stroke="#6a6a6a" stroke-width="0.8"/>
 <text x="1198" y="316" font-size="12" fill="#ddd" font-family="Liberation Sans">-</text>
 <text x="1272" y="317" font-size="11.5" fill="#e8e8e8" font-family="Liberation Sans" text-anchor="middle">Name and Color</text>
 <rect x="1198" y="328" width="131" height="20" fill="#0e0e0e"/><rect x="1200" y="330" width="129" height="18" fill="#585858"/>
 <rect x="1333" y="328" width="17" height="20" fill="#333"/><rect x="1334" y="329" width="15" height="18" fill="#8c0a3c"/>
 <line x1="1359.5" y1="298" x2="1359.5" y2="646" stroke="#3a3a3a" stroke-width="1"/>
 <line x1="1183" y1="646.5" x2="1360" y2="646.5" stroke="#3a3a3a" stroke-width="1"/>
</svg>


<svg class="a" style="left:0;top:607px" width="1366" height="94" viewBox="0 607 1366 94">
 <rect x="0" y="607" width="40" height="46" fill="#3a3a3a"/>
 <defs><linearGradient id="bg1" x1="0" y1="0" x2="0" y2="1"><stop offset="0" stop-color="#5a6a80"/><stop offset="0.55" stop-color="#4a78b8"/><stop offset="1" stop-color="#3a82e0"/></linearGradient></defs>
 <rect x="4" y="607.5" width="36" height="44" rx="5" fill="url(#bg1)"/>
 <rect x="7.5" y="614.5" width="30" height="27" rx="1.5" fill="#5c6470" stroke="#2e343c" stroke-width="1.2"/>
 <!-- time slider -->
 <rect x="40" y="607" width="1143" height="19" fill="#444"/>
 <rect x="40" y="608" width="15" height="16" fill="#3d3d3d" stroke="#333" stroke-width="0.5"/>
 <text x="44" y="621" font-size="12" fill="#ccc" font-family="Liberation Sans">&lt;</text>
 <rect x="56" y="608" width="125" height="17" fill="#111"/>
 <rect x="57" y="608" width="122" height="15" fill="#474747"/>
 <text x="118" y="621" font-size="11" fill="#ddd" font-family="Liberation Sans" text-anchor="middle">0 / 100</text>
 <rect x="181" y="608" width="16" height="16" fill="#3d3d3d" stroke="#333" stroke-width="0.5"/>
 <text x="185" y="621" font-size="12" fill="#ccc" font-family="Liberation Sans">&gt;</text>
 <!-- trackbar -->
 <rect x="40" y="625" width="1143" height="1.5" fill="#1a1a1a"/>
 <rect x="40" y="626.5" width="1143" height="26" fill="#464646"/>
 <rect x="40" y="626.5" width="51" height="26" fill="#3b3b3b"/>
 <rect x="91" y="626.5" width="1041" height="25.5" fill="#2d2d2d"/>
 <g fill="none" stroke="#e8e8e8" stroke-width="1"><rect x="53.5" y="631.5" width="16" height="5"/><rect x="53.5" y="643.5" width="16" height="4"/><path d="M56 634 q3 -2 6 0 t6 0"/><path d="M57 642 v-5 M55 639 l2 -2 l2 2 M66 637 v5 M64 640 l2 2 l2 -2"/></g>
 <path d="M105.5 627v12M115.8 627v12M126.2 627v12M136.5 627v12M146.8 627v12M157.1 627v12M167.4 627v12M177.8 627v12M188.1 627v12M198.4 627v12M208.7 627v12M219.0 627v12M229.4 627v12M239.7 627v12M250.0 627v12M260.3 627v12M270.6 627v12M281.0 627v12M291.3 627v12M301.6 627v12M311.9 627v12M322.2 627v12M332.6 627v12M342.9 627v12M353.2 627v12M363.5 627v12M373.8 627v12M384.2 627v12M394.5 627v12M404.8 627v12M415.1 627v12M425.4 627v12M435.8 627v12M446.1 627v12M456.4 627v12M466.7 627v12M477.0 627v12M487.4 627v12M497.7 627v12M508.0 627v12M518.3 627v12M528.6 627v12M539.0 627v12M549.3 627v12M559.6 627v12M569.9 627v12M580.2 627v12M590.6 627v12M600.9 627v12M611.2 627v12M621.5 627v12M631.8 627v12M642.2 627v12M652.5 627v12M662.8 627v12M673.1 627v12M683.4 627v12M693.8 627v12M704.1 627v12M714.4 627v12M724.7 627v12M735.0 627v12M745.4 627v12M755.7 627v12M766.0 627v12M776.3 627v12M786.6 627v12M797.0 627v12M807.3 627v12M817.6 627v12M827.9 627v12M838.2 627v12M848.6 627v12M858.9 627v12M869.2 627v12M879.5 627v12M889.8 627v12M900.2 627v12M910.5 627v12M920.8 627v12M931.1 627v12M941.4 627v12M951.8 627v12M962.1 627v12M972.4 627v12M982.7 627v12M993.0 627v12M1003.4 627v12M1013.7 627v12M1024.0 627v12M1034.3 627v12M1044.6 627v12M1055.0 627v12M1065.3 627v12M1075.6 627v12M1085.9 627v12M1096.2 627v12M1106.6 627v12M1116.9 627v12M1127.2 627v12" stroke="#8a8a8a" stroke-width="1"/>
 <rect x="91.5" y="628.5" width="7" height="23.5" fill="#8f8a2a" stroke="#6a6420" stroke-width="0.5"/>
 <text x="95" y="651" font-size="11" fill="#e8e4b0" font-family="Liberation Sans" text-anchor="middle">0</text>
 <g font-size="11" fill="#d0d0d0" font-family="Liberation Sans"><text x="146.8" y="651" text-anchor="middle">5</text><text x="198.4" y="651" text-anchor="middle">10</text><text x="250.0" y="651" text-anchor="middle">15</text><text x="301.6" y="651" text-anchor="middle">20</text><text x="353.2" y="651" text-anchor="middle">25</text><text x="404.8" y="651" text-anchor="middle">30</text><text x="456.4" y="651" text-anchor="middle">35</text><text x="508.0" y="651" text-anchor="middle">40</text><text x="559.6" y="651" text-anchor="middle">45</text><text x="611.2" y="651" text-anchor="middle">50</text><text x="662.8" y="651" text-anchor="middle">55</text><text x="714.4" y="651" text-anchor="middle">60</text><text x="766.0" y="651" text-anchor="middle">65</text><text x="817.6" y="651" text-anchor="middle">70</text><text x="869.2" y="651" text-anchor="middle">75</text><text x="920.8" y="651" text-anchor="middle">80</text><text x="972.4" y="651" text-anchor="middle">85</text><text x="1024.0" y="651" text-anchor="middle">90</text><text x="1075.6" y="651" text-anchor="middle">95</text><text x="1127.2" y="651" text-anchor="middle">100</text></g>
 <!-- status bar -->
 <rect x="0" y="653" width="1366" height="48" fill="#444"/>
 <rect x="1" y="655" width="100" height="22" fill="#e8e8e8"/>
 <rect x="2" y="656" width="98" height="20" fill="#dcc6c6" stroke="#8a8a8a" stroke-width="0.8"/>
 <rect x="1" y="678" width="100" height="23" fill="#fff"/><rect x="2" y="679" width="98" height="22" fill="#fff" stroke="#999" stroke-width="0.6"/>
 <text x="7" y="693" font-size="12" fill="#e81010" font-family="Liberation Mono" xml:space="preserve" textLength="82">--  In line:</text>
 <line x1="105.5" y1="655" x2="105.5" y2="701" stroke="#222" stroke-width="1.5"/>
 <rect x="108" y="657" width="385" height="21" fill="#2a2a2a"/><rect x="110" y="659" width="383" height="19" fill="#464646"/>
 <text x="114" y="672" font-size="11.5" fill="#e0e0e0" font-family="Liberation Sans" textLength="69.5">None Selected</text>
 <rect x="108" y="682" width="688" height="19" fill="#2a2a2a"/><rect x="110" y="684" width="686" height="17" fill="#464646"/>
 <text x="114" y="697" font-size="11.5" fill="#e0e0e0" font-family="Liberation Sans" textLength="226">Click and drag up-and-down to zoom in and out</text>
 <!-- icons -->
 <path d="M503 665 a4.5 4.5 0 1 1 8 0 l-2 4 h-4z" fill="#aaa"/><rect x="505" y="669" width="4" height="4" fill="#ddd"/>
 <path d="M530 665 v-2 a3 3 0 0 1 6 0 v2" fill="none" stroke="#bbb" stroke-width="1.5"/><rect x="528" y="665" width="10" height="8" fill="#aaa"/>
 <rect x="553" y="660" width="14" height="14" fill="#f0f0f0"/><circle cx="560" cy="667" r="4" fill="none" stroke="#222" stroke-width="1.5"/><path d="M553 667 h3 M564 667 h3 M560 660 v3 M560 671 v3" stroke="#222" stroke-width="1.5"/>
 <text x="576" y="672" font-size="11.5" fill="#ddd" font-family="Liberation Sans">X:</text>
 <rect x="588" y="658" width="56" height="20" fill="#111"/><rect x="590" y="660" width="54" height="18" fill="#555"/>
 <text x="658" y="672" font-size="11.5" fill="#ddd" font-family="Liberation Sans">Y:</text>
 <rect x="670" y="658" width="56" height="20" fill="#111"/><rect x="672" y="660" width="54" height="18" fill="#555"/>
 <text x="741" y="672" font-size="11.5" fill="#ddd" font-family="Liberation Sans">Z:</text>
 <rect x="752" y="658" width="56" height="20" fill="#111"/><rect x="754" y="660" width="54" height="18" fill="#555"/>
 <rect x="822" y="657" width="100" height="21" fill="#3a3a3a"/><rect x="823" y="658" width="99" height="20" fill="#474747" stroke="#333" stroke-width="0.6"/>
 <text x="828" y="672" font-size="11.5" fill="#e0e0e0" font-family="Liberation Sans" textLength="83">Grid = 1000,0mm</text>
 <rect x="802" y="686" width="12" height="12" fill="none" stroke="#ddd" stroke-width="1.3"/><rect x="805" y="689" width="6" height="6" fill="#ddd"/>
 <rect x="823" y="683" width="99" height="18" fill="#474747" stroke="#333" stroke-width="0.6"/>
 <text x="828" y="697" font-size="11.5" fill="#e0e0e0" font-family="Liberation Sans" textLength="65">Add Time Tag</text>
 <!-- key buttons -->
 <rect x="927.5" y="656.5" width="43" height="43" fill="#464646" stroke="#2a2a2a" stroke-width="1"/>
 <circle cx="941" cy="678" r="4.5" fill="none" stroke="#111" stroke-width="2"/><path d="M945 678 h15 M956 678 v4 M959 678 v3" stroke="#111" stroke-width="2"/>
 <rect x="973.5" y="656.5" width="47" height="20" fill="#474747" stroke="#2a2a2a" stroke-width="1"/>
 <text x="974.5" y="671" font-size="11.5" fill="#e0e0e0" font-family="Liberation Sans" textLength="43">Auto Key</text>
 <rect x="973.5" y="679.5" width="47" height="20" fill="#474747" stroke="#2a2a2a" stroke-width="1"/>
 <text x="978.5" y="694" font-size="11.5" fill="#e0e0e0" font-family="Liberation Sans" textLength="36.5">Set Key</text>
 <rect x="1025" y="658" width="114" height="18" fill="url(#wg4)"/>
 <defs><linearGradient id="wg4" x1="0" y1="0" x2="0" y2="1"><stop offset="0" stop-color="#fdfdfd"/><stop offset="1" stop-color="#dadada"/></linearGradient></defs>
 <text x="1027" y="671" font-size="11.5" fill="#111" font-family="Liberation Sans" textLength="41">Selected</text>
 <path d="M1127 665 h8 l-4 4z" fill="#000"/>
 <path d="M1028 696 l5 -12 l5 10 l5 -12" fill="none" stroke="#d83030" stroke-width="1.3"/><circle cx="1029" cy="694" r="1.5" fill="#48f"/><path d="M1040 699 l3 -3" stroke="#fff" stroke-width="1.3"/>
 <rect x="1051.5" y="680.5" width="87" height="19" fill="#474747" stroke="#2a2a2a" stroke-width="1"/>
 <text x="1063" y="694" font-size="11.5" fill="#e0e0e0" font-family="Liberation Sans" textLength="61">Key Filters...</text>
 <!-- playback -->
 <g fill="none" stroke="#ddd" stroke-width="1.3">
  <path d="M1149 661 v12 M1164 661 v12 M1150 667 l6 -5 v10z M1156 667 l7 -5 v10z"/>
  <path d="M1174 667 l6 -5 v10z M1183 662 v10 M1186 662 v10 M1189 662 v10"/>
  <path d="M1200 661 l12 6 l-12 6z"/>
  <path d="M1220 662 v10 M1223 662 v10 M1226 662 v10 M1229 662 l7 5 l-7 5z"/>
  <path d="M1246 661 v12 M1261 661 v12 M1247 662 l7 5 l-7 5z M1253 662 l7 5 l-7 5z"/>
  <path d="M1149 682 v12 M1163 682 v12 M1150 688 l5 -4 v8z M1162 688 l-5 -4 v8z"/>
 </g>
 <path d="M1213 675 l3 -3" stroke="#fff" stroke-width="1.3"/>
 <g stroke="#222" stroke-width="1.3"><path d="M1169.5 660 v14 M1241.5 660 v14 M1270.5 658 v18 M1167.5 681 v18 M1249.5 681 v18 M1270.5 681 v18"/></g>
 <rect x="1272" y="656" width="23" height="21" fill="#111"/><rect x="1273" y="657" width="21" height="19" fill="#3a82dc"/>
 <circle cx="1282" cy="666" r="5" fill="#ddd"/><path d="M1285 670 l4 4" stroke="#bbb" stroke-width="2.5"/><path d="M1288 661 h5 M1290.5 658.5 v5 M1288 665 h5" stroke="#fff" stroke-width="1"/>
 <g fill="#ddd"><rect x="1300" y="660" width="6" height="6"/><rect x="1307" y="660" width="6" height="6"/><rect x="1300" y="667" width="6" height="6"/></g><circle cx="1310" cy="670" r="3.5" fill="none" stroke="#ddd" stroke-width="1.2"/>
 <path d="M1321 664 v-4 h4 M1333 660 h4 v4 M1321 670 v4 h4" fill="none" stroke="#eee" stroke-width="1.2"/><path d="M1325 663 l3 -2 h5 v6 l-3 2 h-5z" fill="#7ab850"/><path d="M1335 674 l3 -3" stroke="#fff" stroke-width="1.3"/>
 <g fill="#ddd"><rect x="1348" y="660" width="5" height="5"/><rect x="1354" y="660" width="5" height="5"/><rect x="1354" y="666" width="5" height="5"/></g><path d="M1343 668 l3 -2 h5 v6 l-3 2 h-5z" fill="#7ab850"/>
 <rect x="1171" y="679" width="76" height="21" fill="#111"/><rect x="1173" y="681" width="60" height="19" fill="#555"/><rect x="1233" y="681" width="13" height="19" fill="#444"/>
 <text x="1176" y="694" font-size="11.5" fill="#ddd" font-family="Liberation Sans">0</text>
 <path d="M1236 688 l3 -4 l3 4z M1236 692 l3 4 l3 -4z" fill="#bbb"/>
 <rect x="1254" y="681" width="11" height="13" fill="#eee"/><rect x="1256" y="683" width="5" height="5" fill="#2a5aa8"/><circle cx="1265" cy="694" r="4" fill="#eee" stroke="#333" stroke-width="0.8"/>
 <path d="M1276 682 l16 7 l-16 7" fill="none" stroke="#ccc" stroke-width="1.2"/>
 <g fill="#eee"><ellipse cx="1303" cy="688" rx="2.5" ry="4"/><ellipse cx="1311" cy="686" rx="2.5" ry="4"/><circle cx="1303" cy="695" r="1.5"/><circle cx="1311" cy="693" r="1.5"/></g>
 <path d="M1326 693 l4 -8 l5 6z" fill="#7ab850" stroke="#eee" stroke-width="1"/><path d="M1322 697 l3 -3 M1336 697 l-3 -3 M1329 682 v3" stroke="#eee" stroke-width="1"/>
 <rect x="1344" y="682" width="14" height="14" fill="#e8e8e8"/><path d="M1347 685 l8 8 M1347 685 v5 M1347 685 h5" stroke="#222" stroke-width="1.5" fill="none"/>
</svg>
</body></html>
